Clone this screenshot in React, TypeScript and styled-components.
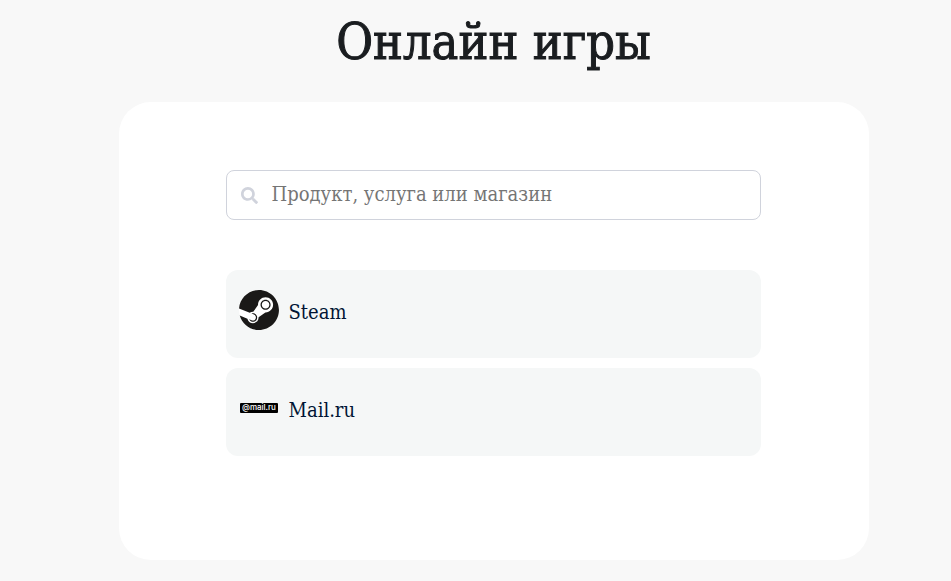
import React, { useState } from "react";
import styled, { createGlobalStyle } from "styled-components";
import { FaSearch } from "react-icons/fa";
import { SiSteam } from "react-icons/si";

const serif = `"DejaVu Serif Condensed", "DejaVu Serif", serif`;

const GlobalStyle = createGlobalStyle`
  *, *::before, *::after { box-sizing: border-box; }
  body {
    margin: 0;
    background: #f8f8f8;
    color: #1a1d20;
    font-family: ${serif};
  }
`;

const Page = styled.main`
  min-height: 100vh;
  display: flex;
  flex-direction: column;
  align-items: center;
  padding: 10px 0 20px 36px;
`;

const Title = styled.h1`
  margin: 0 0 28px;
  font-size: 50px;
  line-height: 64px;
  font-weight: 400;
  -webkit-text-stroke: 1px #1a1d20;
`;

const Card = styled.section`
  width: 100%;
  max-width: 750px;
  padding: 68px 108px 104px 107px;
  border-radius: 32px;
  background: #fff;
`;

const SearchBox = styled.label`
  display: flex;
  align-items: center;
  gap: 14px;
  height: 50px;
  padding: 0 14px;
  border: 1px solid #d0d3dc;
  border-radius: 8px;
  color: #d0d3dc;
  font-size: 17px;
`;

const SearchInput = styled.input`
  flex: 1;
  min-width: 0;
  padding: 0 0 2px;
  border: 0;
  outline: 0;
  background: transparent;
  font-family: inherit;
  font-size: 20px;
  line-height: 28px;
  color: #1a1d20;

  &::placeholder {
    color: #757575;
    opacity: 1;
  }
`;

const Services = styled.ul`
  display: grid;
  gap: 10px;
  margin: 50px 0 0;
  padding: 0;
  list-style: none;
`;

const ServiceLink = styled.a`
  display: flex;
  align-items: flex-start;
  gap: 10px;
  min-height: 88px;
  padding: 20px 13px;
  border-radius: 12px;
  background: #f5f7f7;
  color: #001434;
  text-decoration: none;
`;

const ServiceName = styled.span`
  padding-top: 8px;
  font-size: 20px;
  line-height: 28px;
`;

const Logo = styled.span<{ $round?: boolean }>`
  display: flex;
  align-items: center;
  justify-content: center;
  width: 40px;
  height: 40px;
  border-radius: ${({ $round }) => ($round ? "50%" : "0")};
  background: ${({ $round }) => ($round ? "#fff" : "transparent")};
  color: #1a1918;
`;

const MailLogo = () => (
  <svg width="38" height="10" viewBox="0 0 38 10" aria-hidden="true">
    <rect width="38" height="10" rx="1" fill="#000" />
    <text x="19" y="7" textAnchor="middle" fill="#fff" fontFamily="Inter, sans-serif" fontSize="8" fontWeight="500">
      @mail.ru
    </text>
  </svg>
);

const services = [
  { name: "Steam", round: true, logo: <SiSteam size={40} aria-hidden /> },
  { name: "Mail.ru", round: false, logo: <MailLogo /> },
];

export default function App() {
  const [query, setQuery] = useState("");
  const visible = services.filter((s) => s.name.toLowerCase().includes(query.trim().toLowerCase()));

  return (
    <>
      <GlobalStyle />
      <Page>
        <Title>Онлайн игры</Title>
        <Card>
          <SearchBox>
            <FaSearch aria-hidden />
            <SearchInput
              type="text"
              aria-label="Продукт, услуга или магазин"
              placeholder="Продукт, услуга или магазин"
              value={query}
              onChange={(e) => setQuery(e.target.value)}
            />
          </SearchBox>
          <Services>
            {visible.map((s) => (
              <li key={s.name}>
                <ServiceLink href="#">
                  <Logo $round={s.round}>{s.logo}</Logo>
                  <ServiceName>{s.name}</ServiceName>
                </ServiceLink>
              </li>
            ))}
          </Services>
        </Card>
      </Page>
    </>
  );
}
